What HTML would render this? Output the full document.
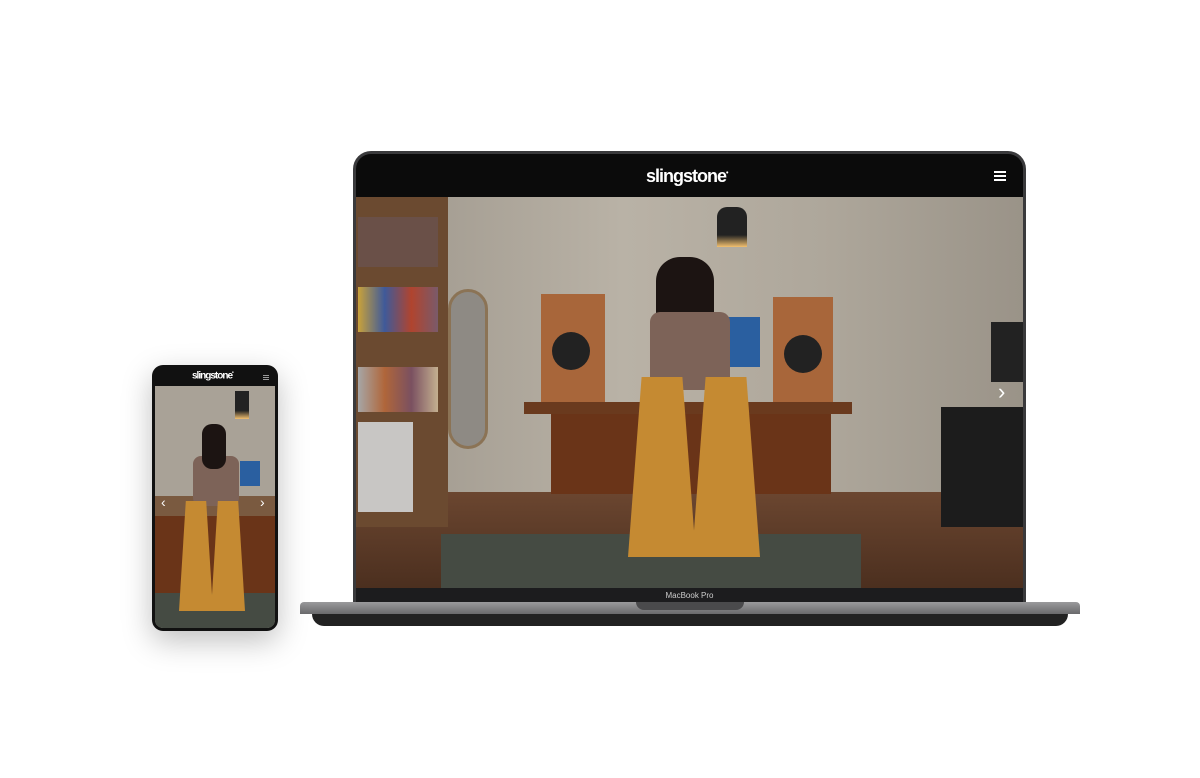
<!DOCTYPE html>
<html><head><style>
*{margin:0;padding:0;box-sizing:border-box}
body{width:1200px;height:778px;background:#fff;position:relative;overflow:hidden;font-family:"Liberation Sans",sans-serif}
.a{position:absolute}
.logo{color:#fff;font-weight:bold;letter-spacing:-1px}
.pant{background:#c58a32;clip-path:polygon(20% 0,80% 0,100% 100%,0 100%)}
</style></head><body>
<!-- laptop -->
<div class="a" style="left:353px;top:151px;width:673px;height:452px;background:#3a3a3c;border-radius:18px 18px 0 0"></div>
<div class="a" style="left:356px;top:154px;width:667px;height:448px;background:#0b0b0b;border-radius:15px 15px 0 0"></div>
<div class="a logo" style="left:646px;top:166px;font-size:18px">slingstone<sup style="font-size:7px">•</sup></div>
<div class="a" style="left:994px;top:171px;width:12px;height:2px;background:#fff;box-shadow:0 4px 0 #fff,0 8px 0 #fff"></div>
<div class="a" style="left:356px;top:197px;width:667px;height:391px;overflow:hidden;background:#b4ada2">
 <div class="a" style="left:0;top:0;width:667px;height:300px;background:linear-gradient(90deg,#9d968b,#b9b2a6 40%,#aea79b 70%,#9a9388)"></div>
 <div class="a" style="left:0;top:295px;width:667px;height:100px;background:linear-gradient(#6b4630,#4a2e1e)"></div>
 <div class="a" style="left:0;top:0;width:92px;height:330px;background:#6b4a30"></div>
 <div class="a" style="left:2px;top:20px;width:80px;height:50px;background:#6a5048"></div>
 <div class="a" style="left:2px;top:90px;width:80px;height:45px;background:linear-gradient(90deg,#c9a23a,#3f5a9a,#b0442e,#7a5a6a)"></div>
 <div class="a" style="left:2px;top:170px;width:80px;height:45px;background:linear-gradient(90deg,#a6a6a6,#b0663a,#7a5060,#c4b090)"></div>
 <div class="a" style="left:2px;top:225px;width:55px;height:90px;background:#c8c6c4"></div>
 <div class="a" style="left:92px;top:92px;width:40px;height:160px;border:3px solid #8b7355;border-radius:20px;background:#8e8a84"></div>
 <div class="a" style="left:185px;top:97px;width:64px;height:112px;background:#a8663a"></div>
 <div class="a" style="left:417px;top:100px;width:60px;height:110px;background:#a8663a"></div>
 <div class="a" style="left:196px;top:135px;width:38px;height:38px;border-radius:50%;background:#222"></div>
 <div class="a" style="left:428px;top:138px;width:38px;height:38px;border-radius:50%;background:#222"></div>
 <div class="a" style="left:366px;top:120px;width:38px;height:50px;background:#2a5fa0"></div>
 <div class="a" style="left:168px;top:205px;width:328px;height:12px;background:#6a3a1e"></div>
 <div class="a" style="left:195px;top:217px;width:280px;height:80px;background:#6a3418"></div>
 <div class="a" style="left:85px;top:337px;width:420px;height:54px;background:#454b43"></div>
 <div class="a" style="left:585px;top:210px;width:82px;height:120px;background:#1c1c1c"></div>
 <div class="a" style="left:635px;top:125px;width:32px;height:60px;background:#222"></div>
 <div class="a" style="left:361px;top:10px;width:30px;height:40px;background:linear-gradient(#222 70%,#f2c070);border-radius:10px 10px 0 0"></div>
 <div class="a" style="left:300px;top:60px;width:58px;height:120px;border-radius:24px 24px 10px 10px;background:#1c1412"></div>
 <div class="a" style="left:294px;top:115px;width:80px;height:78px;border-radius:10px;background:#7d6358"></div>
 <div class="a pant" style="left:272px;top:180px;width:68px;height:180px"></div>
 <div class="a pant" style="left:336px;top:180px;width:68px;height:180px"></div>
 <div class="a" style="left:642px;top:182px;color:#fff;font-size:22px">›</div>
</div>
<div class="a" style="left:356px;top:588px;width:667px;height:14px;background:#1c1c1e;color:#ccc;font-size:8px;text-align:center;line-height:16px">MacBook Pro</div>
<div class="a" style="left:300px;top:602px;width:780px;height:12px;background:linear-gradient(#9a9a9c,#6a6a6c);border-radius:4px 4px 0 0"></div>
<div class="a" style="left:312px;top:614px;width:756px;height:12px;background:#222;border-radius:0 0 40px 40px"></div>
<div class="a" style="left:636px;top:602px;width:108px;height:8px;background:#4a4a4c;border-radius:0 0 8px 8px"></div>
<!-- phone -->
<div class="a" style="left:152px;top:365px;width:126px;height:266px;background:#111;border-radius:11px;box-shadow:0 10px 30px rgba(0,0,0,.25)"></div>
<div class="a logo" style="left:192px;top:370px;font-size:10px">slingstone<sup style="font-size:5px">•</sup></div>
<div class="a" style="left:263px;top:375px;width:6px;height:1px;background:#999;box-shadow:0 2px 0 #999,0 4px 0 #999"></div>
<div class="a" style="left:155px;top:386px;width:120px;height:242px;overflow:hidden;background:#a9a297;border-radius:0 0 8px 8px">
 <div class="a" style="left:0;top:130px;width:120px;height:90px;background:#6a3418"></div>
 <div class="a" style="left:0;top:207px;width:120px;height:40px;background:#454b43"></div>
 <div class="a" style="left:0;top:110px;width:120px;height:20px;background:#7a5a40"></div>
 <div class="a" style="left:38px;top:70px;width:46px;height:50px;background:#7d6358;border-radius:8px"></div>
 <div class="a" style="left:47px;top:38px;width:24px;height:45px;background:#1c1412;border-radius:10px"></div>
 <div class="a pant" style="left:24px;top:115px;width:34px;height:110px"></div>
 <div class="a pant" style="left:56px;top:115px;width:34px;height:110px"></div>
 <div class="a" style="left:85px;top:75px;width:20px;height:25px;background:#2a5fa0"></div>
 <div class="a" style="left:80px;top:5px;width:14px;height:28px;background:linear-gradient(#222 70%,#f2c070)"></div>
 <div class="a" style="left:6px;top:108px;color:#fff;font-size:14px">‹</div>
 <div class="a" style="left:105px;top:108px;color:#fff;font-size:14px">›</div>
</div>
</body></html>
